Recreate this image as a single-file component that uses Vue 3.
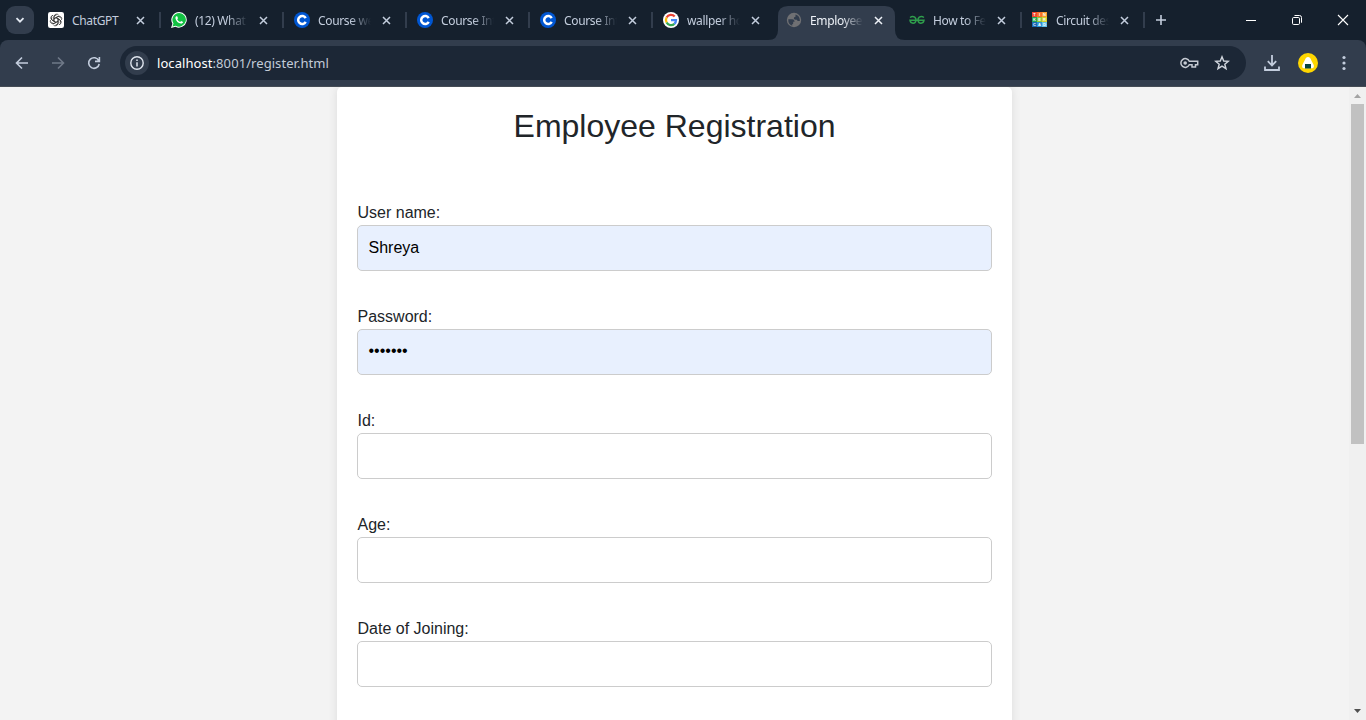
<script setup>
const tabs = [
  { icon: 'gpt', title: 'ChatGPT' },
  { icon: 'wa', title: '(12) What' },
  { icon: 'coursera', title: 'Course we' },
  { icon: 'coursera', title: 'Course Int' },
  { icon: 'coursera', title: 'Course Int' },
  { icon: 'google', title: 'wallper ho' },
  { icon: 'globe', title: 'Employee', active: true },
  { icon: 'gfg', title: 'How to Fe' },
  { icon: 'tinker', title: 'Circuit des' },
]
const noSeparator = [5, 6]
const tinker = [
  ['#f2452c', 'T'], ['#f7702a', 'I'], ['#fb9a2b', 'N'],
  ['#23a455', 'K'], ['#8dc63f', 'E'], ['#d5cf2c', 'R'],
  ['#1768b3', 'C'], ['#2b93d6', 'A'], ['#62bfe8', 'D'],
]
const fields = [
  { label: 'User name:', value: 'Shreya', filled: true },
  { label: 'Password:', value: '•••••••', filled: true, secret: true },
  { label: 'Id:', value: '' },
  { label: 'Age:', value: '' },
  { label: 'Date of Joining:', value: '' },
]
</script>

<template>
  <div class="window">
    <header class="tabstrip">
      <button class="tabsearch">
        <svg width="10" height="10" viewBox="0 0 10 10"><path d="M1.5 3.2 5 6.7 8.5 3.2" fill="none" stroke="#e3e9f2" stroke-width="1.8" /></svg>
      </button>
      <div class="tabs">
        <div v-for="(t, i) in tabs" :key="i" class="tab" :class="{ active: t.active, sep: !noSeparator.includes(i) }">
          <svg v-if="t.active" class="shape" width="137" height="34" viewBox="0 0 137 34"><path d="M0 34Q10 34 10 24V10Q10 0 20 0H117Q127 0 127 10V24Q127 34 137 34Z" fill="#323d4d" /></svg>
          <svg v-if="t.icon === 'gpt'" class="fav" viewBox="0 0 16 16">
            <rect width="16" height="16" rx="2.2" fill="#fff" />
            <g fill="none" stroke="#333" stroke-width=".8">
              <path v-for="a in 6" :key="a" :transform="`rotate(${a * 60} 8 8)`" d="M6 9.1V4.6A2.6 2.6 0 0 1 10.600 3.100M6 6.700 8.900 5A2.500 2.500 0 0 1 12.500 5.800" />
            </g>
          </svg>
          <svg v-else-if="t.icon === 'wa'" class="fav" viewBox="0 0 16 16">
            <path d="M8.2 0A7.8 7.8 0 0 0 1.4 11.7L0 16l4.5-1.2A7.8 7.8 0 1 0 8.2 0Z" fill="#fff" />
            <path d="M8.2 1A6.8 6.8 0 0 0 2.5 11.5L1.500 14.500l3.200-.8A6.8 6.8 0 1 0 8.2 1Z" fill="#13c143" />
            <path d="M5.5 4.2c-.8.4-1.2 1.2-1 2.2.5 2.5 2.8 4.8 5.4 5.2 1 .1 2-.5 2.2-1.5l-2-1.1-.9 1C7.9 9.5 6.8 8.4 6.2 7.2l.8-.9-.8-2Z" fill="#fff" />
          </svg>
          <svg v-else-if="t.icon === 'coursera'" class="fav" viewBox="0 0 16 16">
            <circle cx="8" cy="8" r="8" fill="#0056d2" />
            <path d="M11.7 6.1A4 4 0 1 0 11.7 9.9" fill="none" stroke="#fff" stroke-width="2.5" />
          </svg>
          <svg v-else-if="t.icon === 'google'" class="fav" viewBox="0 0 16 16">
            <circle cx="8" cy="8" r="8" fill="#fff" />
            <g fill="none" stroke-width="2.3">
              <path d="M3.6 5.5A5 5 0 0 1 11.7 4.6" stroke="#ea4335" />
              <path d="M3.6 10.5A5 5 0 0 1 3.6 5.5" stroke="#fbbc05" />
              <path d="M11.4 11.8A5 5 0 0 1 3.6 10.5" stroke="#34a853" />
              <path d="M8 8.2H13A5 5 0 0 1 11.4 11.8" stroke="#4285f4" />
            </g>
          </svg>
          <svg v-else-if="t.icon === 'globe'" class="fav" viewBox="0 0 16 16">
            <circle cx="8" cy="8" r="7.200" fill="#6f7073" />
            <path d="M2.300 7.200H6.200Q8.500 7.200 8.500 9.200V9.800H7.200V11.500Q7 12.200 6.200 12.200V13.700Q2 12.200 2.300 7.200Z" fill="#323d4d" />
            <path d="M9.500 2.400Q13.300 3.300 13.800 7.800V9H12.200Q11 9 11 7.800H9.500Q7.800 7.600 7.800 6.200 7.800 4.900 9.500 4.700Z" fill="#323d4d" />
          </svg>
          <svg v-else-if="t.icon === 'gfg'" class="fav" viewBox="0 0 16 16">
            <path d="M1 5.5Q3.5 3.8 5.7 5.2Q7.3 6.5 7 8.6Q6.3 11.3 4 11.2Q1.3 11 1 8.2H15Q14.7 11 12 11.2Q9.7 11.3 9 8.6Q8.7 6.5 10.3 5.2Q12.5 3.8 15 5.5" fill="none" stroke="#2f9d4c" stroke-width="1.5" />
          </svg>
          <div v-else class="fav tinker">
            <span v-for="(c, n) in tinker" :key="n" :style="{ background: c[0] }">{{ c[1] }}</span>
          </div>
          <span class="title">{{ t.title }}</span>
          <svg class="close" width="9" height="9" viewBox="0 0 9 9"><path d="M1 1 8 8M8 1 1 8" stroke="currentColor" stroke-width="1.5" /></svg>
        </div>
      </div>
      <svg class="plus" width="12" height="12" viewBox="0 0 12 12"><path d="M6 1V11M1 6H11" stroke="#c3cddd" stroke-width="1.6" /></svg>
      <div class="controls">
        <svg width="12" height="12" viewBox="0 0 12 12"><path d="M1 6.5H11" stroke="#fff" /></svg>
        <svg width="12" height="12" viewBox="0 0 12 12" fill="none" stroke="#fff"><rect x="1.5" y="3.5" width="7" height="7" rx="1.2" /><path d="M3.5 1.5H8.5Q10.5 1.5 10.5 3.5V8.7" /></svg>
        <svg width="12" height="12" viewBox="0 0 12 12"><path d="M1 1 11 11M11 1 1 11" stroke="#fff" stroke-width="1.1" /></svg>
      </div>
    </header>

    <div class="toolbarwrap">
      <nav class="toolbar">
        <svg class="nav" viewBox="0 0 16 16"><path d="M14 8H3M8 2.5 2.5 8 8 13.5" /></svg>
        <svg class="nav dim" viewBox="0 0 16 16"><path d="M2 8H13M8 2.5 13.5 8 8 13.5" /></svg>
        <svg class="nav" viewBox="0 0 16 16"><path d="M12.8 5.8A5.3 5.3 0 1 0 13.2 9M13.4 2V6.4H9" /></svg>
        <div class="omnibox">
          <span class="info"><svg width="14" height="14" viewBox="0 0 14 14"><circle cx="7" cy="7" r="6.2" fill="none" stroke="#dfe5ee" stroke-width="1.4" /><path d="M7 6.2V10.4M7 3.5V5" stroke="#dfe5ee" stroke-width="1.5" /></svg></span>
          <span class="url"><b>localhost</b>:8001/register.html</span>
          <svg class="key" width="19" height="12" viewBox="0 0 19 12" fill="none" stroke="#c5cad2" stroke-width="1.5"><path d="M9.3 4.2A4.4 4.4 0 1 0 9.3 7.8H12V10H15.5V7.8H17.7V4.2Z" /><circle cx="5.2" cy="6" r="1.8" fill="#c5cad2" stroke="none" /></svg>
          <svg class="star" width="16" height="16" viewBox="0 0 16 16"><path d="M8 1.8 9.7 6 14.3 6.3 10.8 9.2 12 13.7 8 11.2 4 13.7 5.2 9.2 1.7 6.3 6.3 6Z" fill="none" stroke="#d0d5dd" stroke-width="1.4" /></svg>
        </div>
        <svg class="download" width="16" height="16" viewBox="0 0 16 16"><path d="M8 0V10M3.8 6.2 8 10.4 12.2 6.2M1 11.5V15H15V11.5" fill="none" stroke="#c3cddd" stroke-width="1.8" /></svg>
        <svg class="avatar" width="20" height="20" viewBox="0 0 20 20"><circle cx="10" cy="10" r="10" fill="#ffd600" /><path d="M7.900 5Q10 2.800 12.100 5L15.700 12Q16.500 15 14 15.300H6Q3.500 15 4.300 12Z" fill="#fff" /><path d="M7 11H13V15.500H7Z" fill="#08443e" /></svg>
        <svg class="dots" width="4" height="16" viewBox="0 0 4 16" fill="#c3cddd"><circle cx="2" cy="2.5" r="1.6" /><circle cx="2" cy="8" r="1.6" /><circle cx="2" cy="13.5" r="1.6" /></svg>
      </nav>
    </div>

    <main class="page">
      <div class="viewport">
        <form class="card">
          <h1>Employee Registration</h1>
          <div v-for="f in fields" :key="f.label" class="field">
            <label>{{ f.label }}</label>
            <div class="input" :class="{ filled: f.filled, secret: f.secret }">{{ f.value }}</div>
          </div>
        </form>
      </div>
      <aside class="scrollbar">
        <svg width="17" height="17" viewBox="0 0 17 17"><path d="M5 11 8.5 7 12 11Z" fill="#a3a3a3" /></svg>
        <div class="thumb"></div>
        <svg class="down" width="17" height="17" viewBox="0 0 17 17"><path d="M5 6 8.5 10 12 6Z" fill="#505050" /></svg>
      </aside>
    </main>
  </div>
</template>

<style>
body { margin: 0; overflow: hidden; }
</style>

<style scoped>
* { box-sizing: border-box; }
.window { width: 1366px; height: 720px; display: flex; flex-direction: column; overflow: hidden; background: #15202d; font-family: "Noto Sans", "Open Sans", sans-serif; }
.tabstrip { height: 40px; display: flex; align-items: center; flex: none; }
.tabsearch { width: 28px; height: 28px; margin: 0 4px 0 6px; border: 0; border-radius: 9px; background: #323d4d; padding: 0; display: flex; align-items: center; justify-content: center; }
.tabs { display: flex; height: 40px; }
.tab { position: relative; width: 123px; height: 40px; display: flex; align-items: center; padding-left: 10px; color: #c3cddd; }
.tab.sep { border-right: 2px solid transparent; border-image: linear-gradient(transparent 12px, #323d4d 12px, #323d4d 28px, transparent 28px) 0 2 0 0; }
.shape { position: absolute; left: -8px; top: 6px; }
.fav { position: relative; width: 16px; height: 16px; flex: none; }
.title { position: relative; margin-left: 8px; padding-top: 2px; width: 60px; flex: none; white-space: nowrap; font-size: 12px; line-height: 18px; letter-spacing: -0.35px; -webkit-mask-image: linear-gradient(90deg, #000 32px, transparent 53px); mask-image: linear-gradient(90deg, #000 32px, transparent 53px); }
.tab:first-child .title { -webkit-mask-image: none; mask-image: none; }
.active { color: #eef2f8; }
.close { position: relative; margin-left: 4px; flex: none; }
.tinker { display: grid; grid-template-columns: repeat(3, 5px); grid-template-rows: repeat(3, 5px); }
.tinker span { font: bold 4px/5px "Liberation Sans", sans-serif; color: #fff; text-align: center; }
.plus { margin-left: 10px; }
.controls { margin-left: auto; margin-right: 17px; display: flex; gap: 34px; }
.toolbarwrap { height: 47px; flex: none; }
.toolbar { height: 47px; display: flex; align-items: center; padding-left: 14px; background: #323d4d; border-radius: 8px 8px 0 0; border-bottom: 1px solid #454c55; }
.nav { width: 16px; height: 16px; margin-right: 20px; fill: none; stroke: #c3cddd; stroke-width: 1.6; }
.nav.dim { stroke: #6f7988; }
.omnibox { width: 1126px; height: 34px; margin-left: -2px; border-radius: 17px; background: #1c2736; display: flex; align-items: center; padding: 0 16px 0 5px; }
.info { width: 24px; height: 24px; border-radius: 12px; background: #323d4d; display: flex; align-items: center; justify-content: center; }
.url { margin-left: 8px; font-size: 13px; letter-spacing: 0.07px; color: #c3cbd8; }
.url b { font-weight: 400; color: #fff; }
.key { margin-left: auto; margin-right: 15px; }
.download { margin-left: 18px; }
.avatar { margin-left: 18px; }
.dots { margin-left: 24px; }
.page { flex: 1; min-height: 0; display: flex; background: #f3f3f3; font-family: "Liberation Sans", Arial, sans-serif; }
.viewport { flex: 1; display: flex; justify-content: center; overflow: hidden; }
.card { width: 675px; height: 700px; padding: 0 20px; background: #fff; border-radius: 5px; box-shadow: 0 0 10px rgba(0, 0, 0, .1); }
h1 { margin: 20px 0 55px; height: 38px; font-size: 32px; line-height: 38px; font-weight: 400; text-align: center; color: #212529; }
.field { height: 104px; }
label { display: block; height: 25px; padding-left: 0.5px; line-height: 26px; font-size: 16px; color: #212529; }
.input { height: 46px; border: 1px solid #ccc; border-radius: 5px; padding: 0 10.5px; font-size: 16px; line-height: 43px; color: #000; }
.filled { background: #e8f0fe; }
.secret { line-height: 42px; }
.scrollbar { width: 17px; background: #f0f0f0; display: flex; flex-direction: column; align-items: center; }
.scrollbar svg { display: block; flex: none; }
.thumb { width: 13px; height: 340px; background: #c1c1c1; }
.down { margin-top: auto; }
</style>
